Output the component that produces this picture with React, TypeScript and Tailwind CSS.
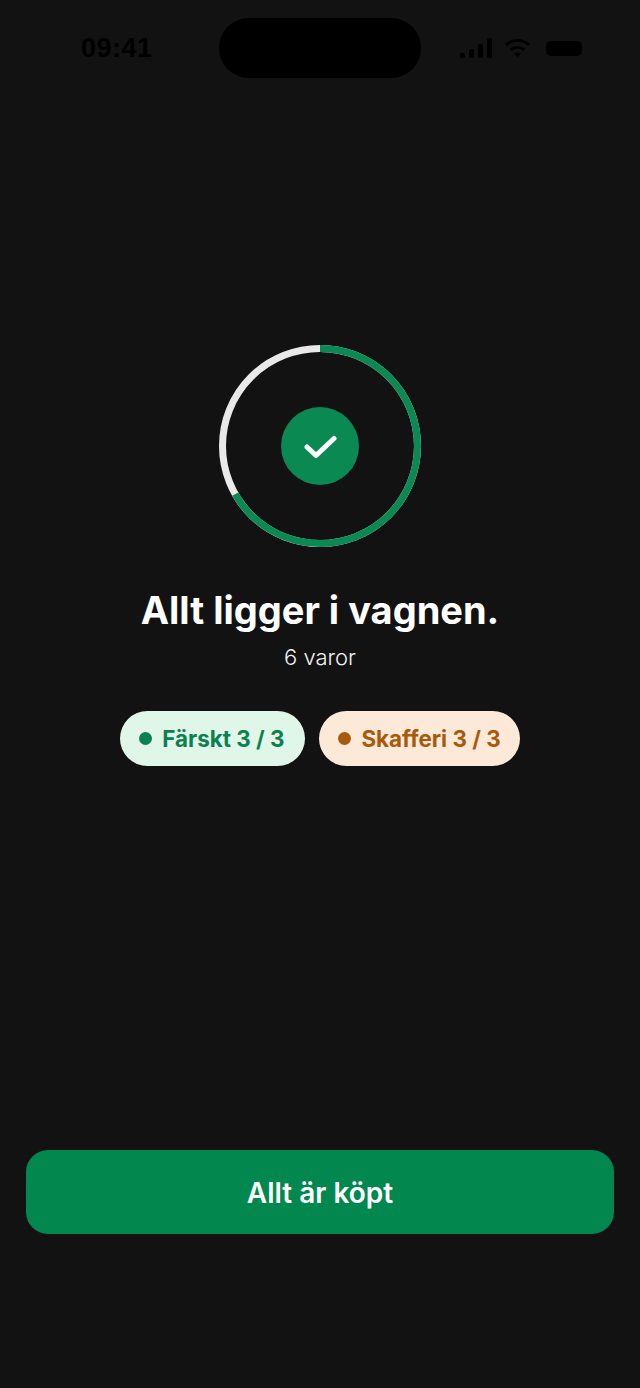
import React from 'react';

const StatusIcons = () => (
  <div className="flex items-center text-black">
    <svg width="32" height="22" viewBox="0 0 32 22" fill="currentColor">
      <rect x="0" y="16" width="5" height="5" rx="1.5" />
      <rect x="9" y="12" width="5" height="9" rx="1.5" />
      <rect x="18" y="7" width="5" height="14" rx="1.5" />
      <rect x="27" y="1" width="5" height="20" rx="1.5" />
    </svg>
    <svg className="ml-[12px]" width="27" height="22" viewBox="0 0 28 22" fill="none" stroke="currentColor" strokeWidth="3">
      <path d="M2 8 C9 1.5 19 1.5 26 8" />
      <path d="M7 13 C11 9.5 17 9.5 21 13" />
      <path d="M14 20.5 L10.5 16.8 C12.5 15.2 15.5 15.2 17.5 16.8 Z" fill="currentColor" stroke="none" />
    </svg>
    <div className="ml-[15px] h-[15px] w-[36px] rounded-[5px] bg-black" />
  </div>
);

const Ring = () => (
  <div className="relative flex h-[202px] w-[202px] items-center justify-center">
    <svg className="absolute inset-0" width="202" height="202" viewBox="0 0 202 202" fill="none">
      <circle cx="101" cy="101" r="97.5" stroke="#e9e9e9" strokeWidth="7" />
      <circle
        cx="101"
        cy="101"
        r="97.5"
        stroke="#0a8a52"
        strokeWidth="7"
        strokeDasharray="408.4 612.6"
        transform="rotate(-90 101 101)"
      />
    </svg>
    <div className="flex h-[78px] w-[78px] items-center justify-center rounded-full bg-[#0a8a52]">
      <svg width="34" height="26" viewBox="0 0 34 26" fill="none" stroke="white" strokeWidth="5" strokeLinecap="round" strokeLinejoin="round">
        <path d="M4 14 L13 22.5 L31 5.5" />
      </svg>
    </div>
  </div>
);

const Pill = ({ label, className }: { label: string; className: string }) => (
  <div className={`flex h-[55px] items-center gap-[10px] rounded-full pl-[19px] text-[22.4px] font-bold ${className}`}>
    <span className="h-[13px] w-[13px] rounded-full bg-current" />
    {label}
  </div>
);

export default function App() {
  return (
    <div className="flex h-[1388px] w-[640px] flex-col items-center overflow-hidden bg-[#121212] font-['Inter',sans-serif] text-white">
      <div className="mt-[18px] grid h-[60px] w-full grid-cols-[1fr_202px_1fr] items-center">
        <div className="pl-[81px] font-['Liberation_Sans',sans-serif] text-[27px] font-bold tracking-[0.5px] text-black">09:41</div>
        <div className="h-[60px] rounded-[30px] bg-black" />
        <div className="flex justify-start pl-[39px]">
          <StatusIcons />
        </div>
      </div>

      <div className="mt-[267px]">
        <Ring />
      </div>

      <h1 className="mt-[38px] text-[38px] leading-[50px] font-bold">Allt ligger i vagnen.</h1>
      <p className="mt-[8px] text-[22px] leading-[28px] font-light text-[#f1f1f1]">6 varor</p>

      <div className="mt-[40px] flex gap-[14px]">
        <Pill label="Färskt 3 / 3" className="bg-[#dff6e9] pr-[21px] text-[#0b8050]" />
        <Pill label="Skafferi 3 / 3" className="bg-[#fde9d8] pr-[19px] text-[#a85a0c]" />
      </div>

      <button className="mt-auto mb-[154px] h-[84px] w-[588px] rounded-[22px] bg-[#02874f] pt-[2px] text-[28px] font-semibold text-white">
        Allt är köpt
      </button>
    </div>
  );
}
